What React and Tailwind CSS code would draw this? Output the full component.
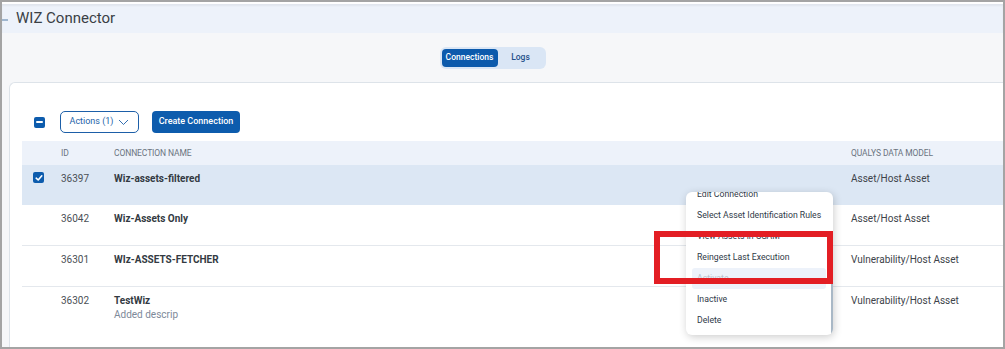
import React from "react";

const rows = [
  { id: "36397", name: "Wiz-assets-filtered", model: "Asset/Host Asset", selected: true },
  { id: "36042", name: "Wiz-Assets Only", model: "Asset/Host Asset" },
  { id: "36301", name: "WIz-ASSETS-FETCHER", model: "Vulnerability/Host Asset" },
  { id: "36302", name: "TestWiz", desc: "Added descrip", model: "Vulnerability/Host Asset", last: true },
];

const menuItems = [
  { label: "Edit Connection" },
  { label: "Select Asset Identification Rules" },
  { label: "View Assets in CSAM" },
  { label: "Reingest Last Execution" },
  { label: "Activate", disabled: true },
  { label: "Inactive" },
  { label: "Delete" },
];

const Check = ({ checked, minus }) => (
  <span className="w-[11px] h-[11px] rounded-[2px] bg-[#0d5cad] flex items-center justify-center">
    {minus && <span className="w-[7px] h-[2px] bg-white rounded-full" />}
    {checked && (
      <svg width="8" height="8" viewBox="0 0 8 8" fill="none">
        <path d="M1.2 4.2 L3.2 6 L6.8 1.8" stroke="white" strokeWidth="1.6" strokeLinecap="round" strokeLinejoin="round" />
      </svg>
    )}
  </span>
);

const RowMenu = () => (
  <div className="absolute left-[684px] top-[190px] w-[147px] h-[143px] bg-white rounded-[6px] shadow-[1px_2px_8px_rgba(0,0,0,0.2)] overflow-hidden">
    <div className="mt-[-8px] px-[6px] pr-[7px]">
      {menuItems.map((m) => (
        <div
          key={m.label}
          className={
            "h-[21px] flex items-center px-[5px] rounded-[3px] text-[8.7px] whitespace-nowrap " +
            (m.disabled ? "bg-[#edf2fa] text-[#b9c2cd]" : "text-[#2f3a48]")
          }
        >
          {m.label}
        </div>
      ))}
    </div>
    <div className="absolute right-0 top-[63px] w-[2px] h-[80px] bg-[#a9b8c6]" />
  </div>
);

const rowClass = (r) => {
  if (r.selected) return "bg-[#dce7f4] h-[40px]";
  if (r.last) return "bg-white h-[60px]";
  return "bg-white h-[41px] border-b border-[#e4e8ed]";
};

export default function App() {
  return (
    <div className="relative w-[1005px] h-[349px] border-2 border-[#a4a4a4] bg-[#f6f7f9] overflow-hidden font-['Roboto',sans-serif]">
      <div className="h-[2px] bg-white" />
      <div className="relative h-[29px] bg-[#edf2fa] shadow-[inset_0_2px_2px_rgba(0,0,0,0.05)] flex items-center">
        <span className="absolute left-0 top-[15px] w-[6px] h-[2px] bg-[#9fb6cf]" />
        <span className="ml-[14px] text-[15px] text-[#3a3f45]">WIZ Connector</span>
      </div>

      <div className="h-[49px] flex items-center justify-center pr-[20px]">
        <div className="flex items-center p-[2px] bg-[#dae6f5] rounded-[6px] text-[8.5px] font-medium">
          <span className="h-[18px] w-[56px] flex items-center justify-center bg-[#0c5aac] text-white rounded-[4px]">Connections</span>
          <span className="h-[18px] w-[46px] flex items-center justify-center text-[#1f4f8a]">Logs</span>
        </div>
      </div>

      <div className="ml-[7px] bg-white border-t border-l border-[#dde3e9] rounded-tl-[6px] h-[300px]">
        <div className="pt-[28px] pl-[24px] flex items-center">
          <Check minus />
          <button className="ml-[15px] h-[22px] w-[79px] border border-[#1d5fa8] rounded-[5px] text-[#1d5fa8] text-[9px] flex items-center justify-center gap-[5px]">
            Actions (1)
            <svg width="11" height="7" viewBox="0 0 11 7" fill="none">
              <path d="M1 1 L5.5 5.5 L10 1" stroke="#1d5fa8" strokeWidth="0.9" />
            </svg>
          </button>
          <button className="ml-[13px] h-[22px] w-[88px] bg-[#0d5cad] rounded-[4px] text-white text-[9px] font-medium flex items-center justify-center">
            Create Connection
          </button>
        </div>

        <div className="ml-[12px] mt-[8px]">
          <div className="h-[24px] bg-[#edf2fa] grid grid-cols-[39px_53px_737px_1fr] items-center text-[8.5px] text-[#6b7480] uppercase tracking-[-0.1px]">
            <span />
            <span>ID</span>
            <span>Connection Name</span>
            <span>Qualys Data Model</span>
          </div>
          {rows.map((r) => (
            <div
              key={r.id}
              className={"grid grid-cols-[39px_53px_737px_1fr] items-start text-[10px] leading-[15px] " + rowClass(r)}
            >
              <span className="pl-[11px] pt-[7px]">{r.selected && <Check checked />}</span>
              <span className="pt-[6px] text-[#4a4f55]">{r.id}</span>
              <div className="pt-[6px]">
                <div className="font-bold text-[#333a42]">{r.name}</div>
                {r.desc && <div className="leading-[13px] text-[#7d8999]">{r.desc}</div>}
              </div>
              <span className="pt-[6px] text-[#3d434a]">{r.model}</span>
            </div>
          ))}
        </div>
      </div>

      <RowMenu />
      <div className="absolute left-[652px] top-[229px] w-[179px] h-[53px] border-[6px] border-[#e31e24]" />
    </div>
  );
}
